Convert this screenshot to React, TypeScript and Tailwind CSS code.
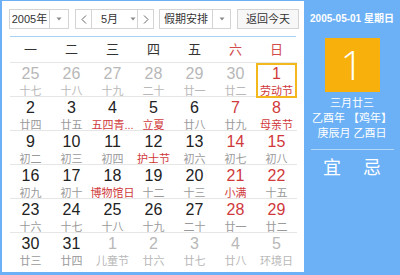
import React from "react";

type Cell = { d: string; l: string; dr?: boolean; lr?: boolean; g?: boolean; today?: boolean };

const rows: Cell[][] = [
  [
    { d: "25", l: "十七", g: true },
    { d: "26", l: "十八", g: true },
    { d: "27", l: "十九", g: true },
    { d: "28", l: "二十", g: true },
    { d: "29", l: "廿一", g: true },
    { d: "30", l: "廿二", g: true },
    { d: "1", l: "劳动节", dr: true, lr: true, today: true },
  ],
  [
    { d: "2", l: "廿四" },
    { d: "3", l: "廿五" },
    { d: "4", l: "五四青...", lr: true },
    { d: "5", l: "立夏", lr: true },
    { d: "6", l: "廿八" },
    { d: "7", l: "廿九", dr: true },
    { d: "8", l: "母亲节", dr: true, lr: true },
  ],
  [
    { d: "9", l: "初二" },
    { d: "10", l: "初三" },
    { d: "11", l: "初四" },
    { d: "12", l: "护士节", lr: true },
    { d: "13", l: "初六" },
    { d: "14", l: "初七", dr: true },
    { d: "15", l: "初八", dr: true },
  ],
  [
    { d: "16", l: "初九" },
    { d: "17", l: "初十" },
    { d: "18", l: "博物馆日", lr: true },
    { d: "19", l: "十二" },
    { d: "20", l: "十三" },
    { d: "21", l: "小满", dr: true, lr: true },
    { d: "22", l: "十五", dr: true },
  ],
  [
    { d: "23", l: "十六" },
    { d: "24", l: "十七" },
    { d: "25", l: "十八" },
    { d: "26", l: "十九" },
    { d: "27", l: "二十" },
    { d: "28", l: "廿一", dr: true },
    { d: "29", l: "廿二", dr: true },
  ],
  [
    { d: "30", l: "廿三" },
    { d: "31", l: "廿四" },
    { d: "1", l: "儿童节", g: true },
    { d: "2", l: "廿六", g: true },
    { d: "3", l: "廿七", g: true },
    { d: "4", l: "廿八", g: true },
    { d: "5", l: "环境日", g: true },
  ],
];

const weekdays = ["一", "二", "三", "四", "五", "六", "日"];

function Tri() {
  return (
    <svg width="6" height="4" viewBox="0 0 6 4">
      <path d="M0.5 0.5 L5.5 0.5 L3 3.5 Z" fill="#8a8a8a" />
    </svg>
  );
}

function Chev({ dir }: { dir: "l" | "r" }) {
  return (
    <svg width="6" height="9" viewBox="0 0 6 9">
      <path
        d={dir === "l" ? "M5 0.5 L1 4.5 L5 8.5" : "M1 0.5 L5 4.5 L1 8.5"}
        fill="none"
        stroke="#666"
        strokeWidth="1"
      />
    </svg>
  );
}

export default function App() {
  const font = { fontFamily: '"Liberation Sans", "Noto Sans CJK SC", sans-serif' };
  return (
    <div className="w-[400px] h-[275px] bg-[#6cb1f6] flex overflow-hidden" style={font}>
      <div className="w-[302px] flex-none mt-[1px] ml-[2px] mb-[3px] bg-white flex flex-col">
        <div className="flex items-center pt-[8px] pl-[7px] text-[11px] text-[#333] whitespace-nowrap">
          <div className="flex flex-none h-[20px] border border-[#d4d4d4]">
            <div className="w-[40px] flex items-center justify-center border-r border-[#d4d4d4]">2005年</div>
            <div className="w-[18px] flex items-center justify-center">
              <Tri />
            </div>
          </div>
          <div className="flex flex-none h-[20px] border border-[#d4d4d4] ml-[6px]">
            <div className="w-[16px] flex items-center justify-center border-r border-[#d4d4d4]">
              <Chev dir="l" />
            </div>
            <div className="w-[46px] flex items-center border-r border-[#d4d4d4]">
              <span className="ml-[9px]">5月</span>
              <span className="ml-[12px] flex">
                <Tri />
              </span>
            </div>
            <div className="w-[15px] flex items-center justify-center">
              <Chev dir="r" />
            </div>
          </div>
          <div className="flex flex-none h-[20px] border border-[#d4d4d4] ml-[5px]">
            <div className="w-[53px] flex items-center justify-center border-r border-[#d4d4d4]">假期安排</div>
            <div className="w-[17px] flex items-center justify-center">
              <Tri />
            </div>
          </div>
          <div className="flex flex-none h-[20px] w-[62px] items-center justify-center border border-[#d4d4d4] bg-[#f7f7f7] ml-[6px]">
            返回今天
          </div>
        </div>
        <div className="mt-[7px] ml-[8px] w-[286px] h-[1px] bg-[#a9d0f5]" />
        <div className="pl-[8px]">
          <div className="grid grid-cols-[repeat(7,41px)] h-[25px] items-center text-[13px]">
            {weekdays.map((w, i) => (
              <div key={w} className={"text-center " + (i >= 5 ? "text-[#d24a4a]" : "text-[#333]")}>
                {w}
              </div>
            ))}
          </div>
          {rows.map((r, ri) => (
            <div key={ri} className="grid grid-cols-[repeat(7,41px)] h-[34px] border-t border-[#e6e6e6] w-[287px]">
              {r.map((c, ci) => {
                const dc = c.g ? "text-[#b8b8b8]" : c.dr ? "text-[#d0393b]" : "text-[#222]";
                const lc = c.g ? "text-[#b8b8b8]" : c.lr ? "text-[#d0393b]" : "text-[#9a9a9a]";
                return (
                  <div key={ci} className="relative flex flex-col items-center pt-[3px]">
                    {c.today && <div className="absolute inset-0 border-2 border-[#f2b81c]" />}
                    <div className={"text-[16px] leading-[16px] " + dc}>{c.d}</div>
                    <div className={"text-[11px] leading-[13px] mt-[3px] whitespace-nowrap " + lc}>{c.l}</div>
                  </div>
                );
              })}
            </div>
          ))}
        </div>
      </div>
      <div className="flex-1 flex flex-col items-center text-white">
        <div className="pt-[12px] text-[10px] leading-[14px] font-semibold whitespace-nowrap">2005-05-01 星期日</div>
        <div className="mt-[12px] w-[55px] h-[54px] bg-[#f8b10c] flex items-center justify-center">
          <span
            className="text-[40px] leading-none font-light"
            style={{ fontFamily: '"Open Sans", "Liberation Sans", sans-serif' }}
          >
            1
          </span>
        </div>
        <div className="mt-[4px] text-[11px] leading-[15px] text-center whitespace-nowrap">
          <div>三月廿三</div>
          <div>乙酉年 【鸡年】</div>
          <div>庚辰月 乙酉日</div>
        </div>
        <div className="mt-[8px] w-[83px] h-[1px] bg-[#ffffff80]" />
        <div className="mt-[6px] flex gap-[22px] text-[18px] leading-[24px]">
          <span>宜</span>
          <span>忌</span>
        </div>
      </div>
    </div>
  );
}
